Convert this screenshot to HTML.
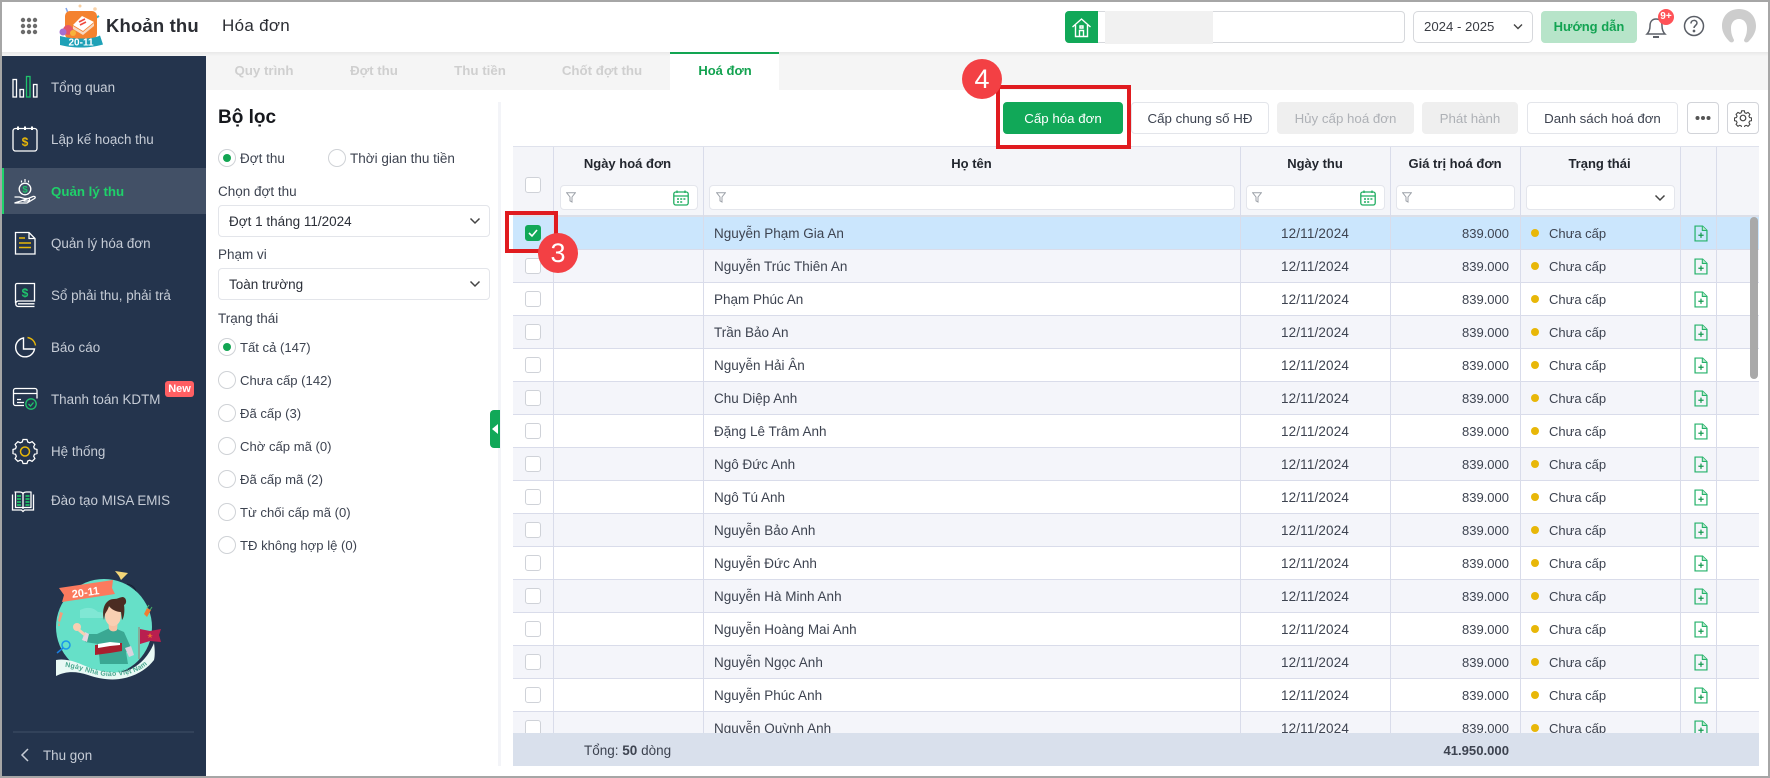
<!DOCTYPE html>
<html lang="vi"><head><meta charset="utf-8"><title>Khoản thu - Hóa đơn</title>
<style>
*{box-sizing:border-box}
html,body{margin:0;padding:0;width:1770px;height:778px;overflow:hidden;background:#fff}
body{font-family:"Liberation Sans",sans-serif;font-size:13.5px;color:#3d4350;position:relative}
.a,.t,.btn,.sel,.rd,.cb{position:absolute}
.t{white-space:nowrap;line-height:20px;height:20px;margin-top:1px}
.frame{position:absolute;left:0;top:0;width:1770px;height:778px;border:2px solid #a6a6a6;pointer-events:none;z-index:50}
.side{position:absolute;left:2px;top:52px;width:204px;height:724px;background:#24344d}
.m{color:#c6ccd6;font-size:13.4px}
.r{font-size:13.1px}
.btn{top:102px;height:32px;border:1px solid #e3e5ea;border-radius:4px;background:#fff;text-align:center;line-height:31px;color:#3d4350;font-size:13.3px}
.btn.dis{background:#efefef;border-color:#efefef;color:#aeb1b6}
.tab{position:absolute;top:67px;font-weight:bold;color:#cfcfcf;font-size:13.3px;line-height:20px;transform:translate(-50%,-6px);white-space:nowrap}
.sel{left:218px;width:272px;height:32px;border:1px solid #e3e5ea;border-radius:4px;background:#fff;padding-left:10px;line-height:31px;color:#2b2f38}
.rd{left:218px;width:18px;height:18px;border-radius:50%;border:1px solid #cfd2d6;background:#fff}
.rd.on::after{content:"";position:absolute;left:4px;top:4px;width:8px;height:8px;border-radius:50%;background:#12a552}
.cb{left:525px;width:16px;height:16px;border:1px solid #cfd2d8;border-radius:3px;background:#fff}
.grid{position:absolute;left:513px;top:146px;width:1246px;height:620px;overflow:hidden;background:#fff;border-top:1px solid #dfe2ec}
.head{position:absolute;left:0;top:0;width:1246px;height:70px;background:#f4f5f9;border-bottom:2px solid #dcdfe8}
.row{position:absolute;left:0;width:1246px;height:33px;border-bottom:1px solid #d9dcea;line-height:33px}
.row.g{background:#f4f5fa}.row.s{background:#cbe6fd}
.row span{position:absolute;top:0;white-space:nowrap}
.n{left:201px}.d{left:732px;width:140px;text-align:center;letter-spacing:.15px}.v{right:250px;font-size:13px}
.c{position:absolute;top:0;width:1px;background:#d9dcea;height:587px;z-index:3}
.s-t{left:1036px;font-size:13px}
.dot{position:absolute;left:1018px;top:12px;width:8px;height:8px;border-radius:50%;background:#e8b708}
.row .cb{left:12px;top:8px}
.row svg{position:absolute;left:1181px;top:8px}
.h{position:absolute;top:7px;font-weight:bold;color:#22262e;text-align:center;line-height:20px;white-space:nowrap;font-size:13px}
.f{position:absolute;top:38px;height:25px;background:#fff;border:1px solid #e4e6ec;border-radius:4px}
.foot{position:absolute;left:0;top:586px;width:1246px;height:33px;background:#d9e0ec;z-index:6;line-height:34px}
.red{position:absolute;border:4px solid #e01b1f;z-index:20}
.num{position:absolute;width:40px;height:40px;border-radius:50%;background:#f34044;color:#fff;font-size:27px;text-align:center;line-height:40px;z-index:21}
</style></head><body>

<svg width="0" height="0" style="position:absolute"><defs>
<symbol id="doc" viewBox="0 0 16 19"><path d="M1.2 1h8.6l5 5v12H1.200z" fill="none" stroke="#25b26a" stroke-width="1.400"/><path d="M9.500 1v5h5.300" fill="#bfead2" stroke="#25b26a" stroke-width="1.200"/><path d="M8 8.500v6M5 11.500h6" stroke="#149a50" stroke-width="1.400"/></symbol>
<symbol id="fil" viewBox="0 0 10 11"><path d="M.7.800h8.600L6 5v5L4 8.800V5z" fill="none" stroke="#9ca1a8" stroke-width="1"/></symbol>
<symbol id="cal" viewBox="0 0 16 16"><rect x=".8" y="2" width="14.400" height="13" rx="2" fill="none" stroke="#1fad60" stroke-width="1.300"/><path d="M1 6h14M4 .5v2.500M12 .5v2.500" stroke="#1fad60" stroke-width="1.300"/><path d="M4 9h2M7.200 9h2M10.400 9h2M4 12h2M7.200 12h2" stroke="#1fad60" stroke-width="1.500"/></symbol>
</defs></svg>

<!-- header -->
<div class="a" style="left:0;top:0;width:1770px;height:52px;background:#fff"></div>
<svg class="a" style="left:20px;top:17px" width="18" height="18" fill="#6b6b6b"><circle cx="3" cy="3" r="2.200"/><circle cx="9" cy="3" r="2.200"/><circle cx="15" cy="3" r="2.200"/><circle cx="3" cy="9" r="2.200"/><circle cx="9" cy="9" r="2.200"/><circle cx="15" cy="9" r="2.200"/><circle cx="3" cy="15" r="2.200"/><circle cx="9" cy="15" r="2.200"/><circle cx="15" cy="15" r="2.200"/></svg>
<svg class="a" style="left:58px;top:3px" width="47" height="46" viewBox="0 0 47 46">
<circle cx="22" cy="3" r="1.500" fill="#f9cfa0"/><circle cx="37" cy="6" r="1.800" fill="#f9d2a8"/><path d="M8 5l2 5" stroke="#7fa2e8" stroke-width="1.500"/><path d="M36 16l5-3" stroke="#3ab4c8" stroke-width="2"/>
<rect x="7" y="8" width="32" height="28" rx="5" fill="#f4822f"/>
<path d="M24 13l12 6-11 9-10-6z" fill="#fff"/><path d="M15 23l10 6 11-9v3l-11 9-10-6z" fill="#f7d8c2"/><path d="M21 19l6-3M22 22l6-3" stroke="#ef4a3f" stroke-width="1.600"/>
<circle cx="10" cy="27" r="5" fill="#e5566a"/><circle cx="5" cy="29" r="3.500" fill="#a66fd0"/><circle cx="15" cy="30" r="3" fill="#f7b23b"/>
<path d="M2 33c8 2 14 2.500 22 2.500s14-1 18-3l3 9c-8 2-14 3-22 3s-15-1-21-2.500z" fill="#1ea1b7"/>
<text x="23" y="42.500" text-anchor="middle" font-family="Liberation Sans" font-weight="bold" font-size="10" fill="#fff">20-11</text></svg>
<div class="t" style="left:106px;top:15px;font-size:18.500px;font-weight:bold;color:#2b2d33;letter-spacing:.15px">Khoản thu</div>
<div class="t" style="left:222px;top:15px;font-size:17px;color:#2b2d33;letter-spacing:.3px">Hóa đơn</div>
<div class="a" style="left:1065px;top:11px;width:340px;height:32px;border:1px solid #d6d8dc;border-radius:4px;background:#fff"></div>
<div class="a" style="left:1065px;top:11px;width:33px;height:32px;background:#11a858;border-radius:4px 0 0 4px"></div>
<svg class="a" style="left:1071px;top:17px" width="21" height="21" viewBox="0 0 21 21" fill="none" stroke="#fff" stroke-width="1.400"><path d="M1.500 10L10.500 2l9 8M4.500 8v11.500h12V8"/><path d="M8.500 19.500v-6h4v6M9 9h3v2H9z"/></svg>
<div class="a" style="left:1105px;top:11px;width:108px;height:33px;background:#f1f1f1"></div>
<div class="a" style="left:1413px;top:11px;width:120px;height:32px;border:1px solid #d6d8dc;border-radius:5px;background:#fff"></div>
<div class="t" style="left:1424px;top:16px;font-size:13.200px;color:#3a3d44">2024 - 2025</div>
<svg class="a" style="left:1512px;top:23px" width="12" height="8" fill="none" stroke="#444" stroke-width="1.400"><path d="M2 1.500l4 4 4-4"/></svg>
<div class="a" style="left:1541px;top:11px;width:96px;height:32px;background:#b7e4c9;border-radius:4px;color:#12a352;text-align:center;line-height:31px;font-weight:bold;font-size:13px">Hướng dẫn</div>
<svg class="a" style="left:1644px;top:13px" width="24" height="28" viewBox="0 0 24 28" fill="none" stroke="#5d6169" stroke-width="1.500"><path d="M3 21c2-2 3-4 3-8 0-4 2-7 6-7s6 3 6 7c0 4 1 6 3 8z"/><path d="M9 24h6" stroke-width="2"/></svg>
<div class="a" style="left:1658px;top:9px;width:16px;height:16px;border-radius:50%;background:#ff5257;color:#fff;font-size:10px;font-weight:bold;text-align:center;line-height:16px">9+</div>
<svg class="a" style="left:1683px;top:15px" width="22" height="22" viewBox="0 0 22 22" fill="none" stroke="#5a5e66" stroke-width="1.500"><circle cx="11" cy="11" r="9.500"/><path d="M8 8.500c0-4 6-4 6-.5 0 2.500-3 2.500-3 5"/><circle cx="11" cy="16" r=".6"/></svg>
<svg class="a" style="left:1722px;top:9px" width="34" height="34" viewBox="0 0 34 34"><path d="M8 33C3 28 0 23 0 17 0 7 7 0 17 0s17 7 17 17c0 6-3 11-8 16-2 1-4 0-4-2 2-4 3-7 3-12 0-5-3-9-8-9s-8 4-8 9c0 5 1 8 3 12 0 2-2 3-4 2z" fill="#cdcdcd"/></svg>
<div class="a" style="left:0;top:52px;width:1770px;height:4px;background:linear-gradient(#e9e9e9,#f5f5f5);z-index:2"></div>

<!-- tabs -->
<div class="a" style="left:206px;top:52px;width:1562px;height:38px;background:#f5f5f5"></div>
<div class="a" style="left:670px;top:52px;width:109px;height:38px;background:#fff;border-top:2px solid #12a552;z-index:3"></div>
<div class="tab" style="left:264px">Quy trình</div>
<div class="tab" style="left:374px">Đợt thu</div>
<div class="tab" style="left:480px">Thu tiền</div>
<div class="tab" style="left:602px">Chốt đợt thu</div>
<div class="tab" style="left:725px;color:#12a24f;z-index:4;font-size:13px">Hoá đơn</div>

<!-- sidebar -->
<div class="side"></div>
<div class="a" style="left:2px;top:168px;width:204px;height:46px;background:#425066"></div>
<div class="a" style="left:2px;top:168px;width:2px;height:46px;background:#1fd36b"></div>
<svg class="a" style="left:0;top:52px" width="206" height="724" viewBox="0 52 206 724" fill="none" stroke="#fff" stroke-width="1.300">
<rect x="13" y="79.500" width="3.500" height="17.500"/><rect x="20" y="89.500" width="3.500" height="7.500"/><rect x="26.500" y="76.500" width="3.500" height="20.500" stroke="#1fc46c"/><rect x="33.500" y="84.500" width="3.500" height="12.500"/>
<rect x="13" y="128.500" width="24" height="22.500" rx="2.500"/><path d="M18 126.500v3.500M25 126.500v3.500M32 126.500v3.500" stroke-width="2"/><text x="25" y="146" text-anchor="middle" font-size="12" font-weight="bold" fill="#e8b708" stroke="none" font-family="Liberation Sans">$</text>
<circle cx="25" cy="189" r="5.800"/><text x="25" y="192.500" text-anchor="middle" font-size="9.500" font-weight="bold" fill="#1fc46c" stroke="none" font-family="Liberation Sans">$</text><path d="M25 179v3M21.500 180.500v2M28.500 180.500v2" stroke-width="1.200"/><path d="M14.500 197h5l5 1.500h4c1.500 0 1.500 2.500-1 2.500h-4M27 199l6-2.500c2-.5 3 1 1.500 2L27 203H14.500z"/>
<path d="M15.500 232.500h13.500l6 6v15.500H15.500zM29 232.500v6h6"/><path d="M19 238h6M19 243h12M19 247.500h12" stroke="#e8b708" stroke-width="1.500"/>
<path d="M15.500 303V285a1.500 1.500 0 0 1 1.500-1.500h17.500V301H18a2.800 2.800 0 0 0 0 5.500h16.500"/><path d="M18 303.800h16.500"/><text x="25" y="297" text-anchor="middle" font-size="12" font-weight="bold" fill="#1fc46c" stroke="none" font-family="Liberation Sans">$</text>
<path d="M23.500 338A9.500 9.500 0 1 0 34.500 349H23.500z" stroke-width="1.400"/><path d="M27.500 337.500a9.500 9.500 0 0 1 8 8" stroke="#e8b708" stroke-width="1.400"/>
<path d="M24 405.500H15.500a2 2 0 0 1-2-2v-13a2 2 0 0 1 2-2h19.500a2 2 0 0 1 2 2v8M13.500 393.500h23.500M17 399.500h4M17 402.500h7"/><circle cx="31" cy="404" r="5.200" stroke="#1fc46c"/><path d="M28.500 404l2 2 3-3.500" stroke="#1fc46c"/>
<path d="M22.500 439.500h5l1 3.200 2.500 1 3-1.500 3.500 3.500-1.500 3 1 2.500 3.200 1v5l-3.200 1-1 2.500 1.500 3-3.500 3.500-3-1.500-2.500 1-1 3.200h-5l-1-3.200-2.500-1-3 1.500-3.500-3.500 1.500-3-1-2.500-3.200-1v-5l3.200-1 1-2.500-1.500-3 3.500-3.500 3 1.500 2.500-1z" transform="translate(25,451.500) scale(.79) translate(-25,-454.700)" stroke-width="1.600"/><circle cx="25" cy="451.500" r="4.500" stroke="#e8b708" stroke-width="1.500"/>
<path d="M12.500 494.500v15.500h9l1.500 1.500 1.500-1.500h9V494.500"/><path d="M14.500 492h5c2 0 3.500.8 3.500 2.500V509M31.500 492h-5c-2 0-3.500.8-3.500 2.500"/><path d="M15.500 492v15.500h7.500M31 492v15.500h-7.500"/><path d="M17 496h4M17 499h4M17 502h4M17 505h4M25.500 496h4M25.500 499h4M25.500 502h4M25.500 505h4" stroke="#1fd36b" stroke-width="1.500"/>
<path d="M28 749l-6 6 6 6" stroke="#c6ccd6" stroke-width="1.500"/>
<path d="M13 732h181" stroke="#3f4f66" stroke-width="1"/>
</svg>
<div class="t m" style="left:51px;top:77px">Tổng quan</div>
<div class="t m" style="left:51px;top:129px">Lập kế hoạch thu</div>
<div class="t" style="left:51px;top:181px;color:#1fd16a;font-weight:bold;font-size:13.300px">Quản lý thu</div>
<div class="t m" style="left:51px;top:233px">Quản lý hóa đơn</div>
<div class="t m" style="left:51px;top:285px">Sổ phải thu, phải trả</div>
<div class="t m" style="left:51px;top:337px">Báo cáo</div>
<div class="t m" style="left:51px;top:389px">Thanh toán KDTM</div>
<div class="a" style="left:165px;top:381px;width:29px;height:16px;background:#ff5f63;border-radius:3px;color:#fff;font-size:11px;font-weight:bold;text-align:center;line-height:16px">New</div>
<div class="t m" style="left:51px;top:441px">Hệ thống</div>
<div class="t m" style="left:51px;top:490px">Đào tạo MISA EMIS</div>
<div class="t m" style="left:43px;top:745px">Thu gọn</div>

<!-- illustration -->
<svg class="a" style="left:50px;top:565px" width="120" height="120" viewBox="50 565 120 120">
<path d="M127 584c5 1 9 4 9 9" fill="none" stroke="#111c2c" stroke-width=".8"/>
<path d="M115 571l13 2-7 7-2-4z" fill="#f4d678"/>
<circle cx="104" cy="627" r="48" fill="#66e0c8"/>
<path d="M80 610c8-4 14-2 18 2 6 0 9 3 8 6H80zM85 640c6-3 12-2 14 1H85z" fill="#80e7d4"/>
<path d="M59 588l54-8-1 8 3 6-53 8 2-7z" fill="#fb7a5e"/>
<text x="86" y="596" transform="rotate(-8 86 596)" text-anchor="middle" font-family="Liberation Sans" font-weight="bold" font-size="11" fill="#fff">20-11</text>
<path d="M112 627L97 634l-10 0-2 8 13 2 2 20h28l-2-12 6-2-8-18z" fill="#3aa893"/>
<path d="M117 630c-2 2-6 2-8-1l-1-10h10z" fill="#f6c3a5"/>
<ellipse cx="113" cy="616" rx="8" ry="10" fill="#f8cfb2"/>
<path d="M104 620C101 608 106 599 114 599c4 0 6-2 9-2 4 1 4 7 1 8 1 6 0 13-2 15l-1-8c-5 0-10-3-12-6-1 4-3 6-4 8z" fill="#4b2c22"/>
<path d="M95 645l15-2 12 0v8l-12 2-15 2z" fill="#a81f2e"/><path d="M98 644l12-2 10 1v2l-10 1-12 2z" fill="#fff"/>
<path d="M85 632l-3 8 5 2 2-8z" fill="#e6d5e0"/><circle cx="77" cy="627" r="4" fill="#f8cfb2"/><path d="M79 630l6 5" stroke="#f8cfb2" stroke-width="3"/>
<path d="M125 648l4 9 5-2-3-9z" fill="#dcd2de"/>
<path d="M139 627v32" stroke="#8f9a8a" stroke-width="1.500"/><path d="M140 629l10 2 11-2-2 6 2 7-11-1-10 3z" fill="#b91f4f"/><path d="M150 633l1 2h2l-2 1 1 2-2-1-2 1 1-2-2-1h2z" fill="#ec6b2d"/>
<path d="M60 612l-2 9 2 1 3-9zM59 622l-1 4 2 0z" fill="#f39d7c"/>
<circle cx="66" cy="645" r="4" fill="none" stroke="#1b97ea" stroke-width="1.500"/><path d="M63 648l-6 5" stroke="#1b7ee0" stroke-width="1.500"/>
<path d="M144 614l3-6 4 2-4 7z" fill="#f07d32"/><path d="M147 608l2-3M150 610l2-3" stroke="#45b26b" stroke-width="1"/>
<path d="M56 660C68 658 78 663 90 668 102 672 112 673 123 672 135 669 147 660 154 643 155 650 155 656 154 660 148 668 138 675 125 678 112 681 100 679 88 675 76 671 66 671 56 676z" fill="#e9f9f5"/>
<path id="bp" d="M65 667C80 668 95 677 112 676S140 672 150 662" fill="none"/>
<text font-family="Liberation Sans" font-weight="bold" font-size="7" fill="#4aa88f"><textPath href="#bp" textLength="86">Ngày Nhà Giáo Việt Nam</textPath></text>
</svg>

<!-- filter -->
<div class="t" style="left:218px;top:106px;font-size:19px;font-weight:bold;color:#16181d;line-height:22px;height:22px">Bộ lọc</div>
<div class="rd on" style="top:149px"></div><div class="t" style="left:240px;top:148px">Đợt thu</div>
<div class="rd" style="left:328px;top:149px"></div><div class="t" style="left:350px;top:148px">Thời gian thu tiền</div>
<div class="t" style="left:218px;top:181px">Chọn đợt thu</div>
<div class="sel" style="top:205px">Đợt 1 tháng 11/2024</div>
<div class="t" style="left:218px;top:244px">Phạm vi</div>
<div class="sel" style="top:268px">Toàn trường</div>
<svg class="a" style="left:469px;top:217px" width="12" height="8" fill="none" stroke="#444" stroke-width="1.500"><path d="M1.500 1.500l4.500 4.500 4.500-4.500"/></svg>
<svg class="a" style="left:469px;top:280px" width="12" height="8" fill="none" stroke="#444" stroke-width="1.500"><path d="M1.500 1.500l4.500 4.500 4.500-4.500"/></svg>
<div class="t" style="left:218px;top:308px">Trạng thái</div>
<div class="rd on" style="top:338px"></div><div class="t r" style="left:240px;top:337px">Tất cả (147)</div>
<div class="rd" style="top:371px"></div><div class="t r" style="left:240px;top:370px">Chưa cấp (142)</div>
<div class="rd" style="top:404px"></div><div class="t r" style="left:240px;top:403px">Đã cấp (3)</div>
<div class="rd" style="top:437px"></div><div class="t r" style="left:240px;top:436px">Chờ cấp mã (0)</div>
<div class="rd" style="top:470px"></div><div class="t r" style="left:240px;top:469px">Đã cấp mã (2)</div>
<div class="rd" style="top:503px"></div><div class="t r" style="left:240px;top:502px">Từ chối cấp mã (0)</div>
<div class="rd" style="top:536px"></div><div class="t r" style="left:240px;top:535px">TĐ không hợp lệ (0)</div>
<div class="a" style="left:498px;top:102px;width:3px;height:664px;background:#f3f4f8"></div>
<div class="a" style="left:490px;top:410px;width:10px;height:38px;background:#11a858;border-radius:4px 0 0 4px"></div>
<svg class="a" style="left:492px;top:424px" width="7" height="10"><path d="M6 0v10L0 5z" fill="#fff"/></svg>

<!-- toolbar -->
<div class="btn" style="left:1003px;width:120px;background:#11a858;border-color:#11a858;color:#fff">Cấp hóa đơn</div>
<div class="btn" style="left:1131px;width:138px">Cấp chung số HĐ</div>
<div class="btn dis" style="left:1277px;width:137px">Hủy cấp hoá đơn</div>
<div class="btn dis" style="left:1422px;width:96px">Phát hành</div>
<div class="btn" style="left:1527px;width:151px">Danh sách hoá đơn</div>
<div class="btn" style="left:1687px;width:32px;border-color:#d2d4d9"></div>
<svg class="a" style="left:1695px;top:115px" width="16" height="6" fill="#555"><circle cx="2.500" cy="3" r="2"/><circle cx="8" cy="3" r="2"/><circle cx="13.500" cy="3" r="2"/></svg>
<div class="btn" style="left:1727px;width:32px;border-color:#d2d4d9"></div>
<svg class="a" style="left:1734px;top:109px" width="18" height="18" viewBox="0 0 18 18" fill="none" stroke="#444" stroke-width="1.200"><path d="M7.500 1h3l.5 2.200 1.600.7 2-1.100 2.100 2.100-1.100 2 .7 1.600 2.200.5v3l-2.200.5-.7 1.600 1.100 2-2.100 2.100-2-1.100-1.600.7-.5 2.200h-3l-.5-2.200-1.600-.7-2 1.100-2.100-2.100 1.100-2-.7-1.600-2.200-.5v-3l2.200-.5.700-1.600-1.100-2 2.100-2.100 2 1.100 1.600-.7z" transform="translate(.9,.9) scale(.9)"/><circle cx="9" cy="9" r="2.800"/></svg>

<!-- grid -->
<div class="grid">
 <div class="head"></div>
 <i class="c" style="left:40px"></i><i class="c" style="left:190px"></i><i class="c" style="left:727px"></i><i class="c" style="left:877px"></i><i class="c" style="left:1007px"></i><i class="c" style="left:1167px"></i><i class="c" style="left:1203px"></i>
 <div class="cb" style="left:12px;top:30px"></div>
 <div class="h" style="left:40px;width:149px">Ngày hoá đơn</div>
 <div class="h" style="left:190px;width:537px">Họ tên</div>
 <div class="h" style="left:728px;width:148px">Ngày thu</div>
 <div class="h" style="left:877px;width:130px">Giá trị hoá đơn</div>
 <div class="h" style="left:1007px;width:159px">Trạng thái</div>
 <div class="f" style="left:47px;width:138px"></div>
 <div class="f" style="left:196px;width:526px"></div>
 <div class="f" style="left:733px;width:139px"></div>
 <div class="f" style="left:883px;width:119px"></div>
 <div class="f" style="left:1013px;width:149px"></div>
 <svg class="a" style="left:53px;top:45px;z-index:4" width="10" height="11"><use href="#fil"/></svg>
 <svg class="a" style="left:203px;top:45px;z-index:4" width="10" height="11"><use href="#fil"/></svg>
 <svg class="a" style="left:739px;top:45px;z-index:4" width="10" height="11"><use href="#fil"/></svg>
 <svg class="a" style="left:889px;top:45px;z-index:4" width="10" height="11"><use href="#fil"/></svg>
 <svg class="a" style="left:160px;top:43px;z-index:4" width="16" height="16"><use href="#cal"/></svg>
 <svg class="a" style="left:847px;top:43px;z-index:4" width="16" height="16"><use href="#cal"/></svg>
 <svg class="a" style="left:1141px;top:47px;z-index:4" width="12" height="9" fill="none" stroke="#444" stroke-width="1.500"><path d="M1.500 1.500l4.500 4.500 4.500-4.500"/></svg>

 <div class="row s" style="top:70px"><i class="cb" style="background:#11a858;border-color:#11a858"></i><svg style="left:14px;top:11px" width="12" height="10" fill="none" stroke="#fff" stroke-width="1.600"><path d="M2 5l3 3 5-6"/></svg><span class="n">Nguyễn Phạm Gia An</span><span class="d">12/11/2024</span><span class="v">839.000</span><i class="dot"></i><span class="s-t">Chưa cấp</span><svg width="14" height="17"><use href="#doc"/></svg></div>
 <div class="row g" style="top:103px"><i class="cb"></i><span class="n">Nguyễn Trúc Thiên An</span><span class="d">12/11/2024</span><span class="v">839.000</span><i class="dot"></i><span class="s-t">Chưa cấp</span><svg width="14" height="17"><use href="#doc"/></svg></div>
 <div class="row" style="top:136px"><i class="cb"></i><span class="n">Phạm Phúc An</span><span class="d">12/11/2024</span><span class="v">839.000</span><i class="dot"></i><span class="s-t">Chưa cấp</span><svg width="14" height="17"><use href="#doc"/></svg></div>
 <div class="row g" style="top:169px"><i class="cb"></i><span class="n">Trần Bảo An</span><span class="d">12/11/2024</span><span class="v">839.000</span><i class="dot"></i><span class="s-t">Chưa cấp</span><svg width="14" height="17"><use href="#doc"/></svg></div>
 <div class="row" style="top:202px"><i class="cb"></i><span class="n">Nguyễn Hải Ân</span><span class="d">12/11/2024</span><span class="v">839.000</span><i class="dot"></i><span class="s-t">Chưa cấp</span><svg width="14" height="17"><use href="#doc"/></svg></div>
 <div class="row g" style="top:235px"><i class="cb"></i><span class="n">Chu Diệp Anh</span><span class="d">12/11/2024</span><span class="v">839.000</span><i class="dot"></i><span class="s-t">Chưa cấp</span><svg width="14" height="17"><use href="#doc"/></svg></div>
 <div class="row" style="top:268px"><i class="cb"></i><span class="n">Đặng Lê Trâm Anh</span><span class="d">12/11/2024</span><span class="v">839.000</span><i class="dot"></i><span class="s-t">Chưa cấp</span><svg width="14" height="17"><use href="#doc"/></svg></div>
 <div class="row g" style="top:301px"><i class="cb"></i><span class="n">Ngô Đức Anh</span><span class="d">12/11/2024</span><span class="v">839.000</span><i class="dot"></i><span class="s-t">Chưa cấp</span><svg width="14" height="17"><use href="#doc"/></svg></div>
 <div class="row" style="top:334px"><i class="cb"></i><span class="n">Ngô Tú Anh</span><span class="d">12/11/2024</span><span class="v">839.000</span><i class="dot"></i><span class="s-t">Chưa cấp</span><svg width="14" height="17"><use href="#doc"/></svg></div>
 <div class="row g" style="top:367px"><i class="cb"></i><span class="n">Nguyễn Bảo Anh</span><span class="d">12/11/2024</span><span class="v">839.000</span><i class="dot"></i><span class="s-t">Chưa cấp</span><svg width="14" height="17"><use href="#doc"/></svg></div>
 <div class="row" style="top:400px"><i class="cb"></i><span class="n">Nguyễn Đức Anh</span><span class="d">12/11/2024</span><span class="v">839.000</span><i class="dot"></i><span class="s-t">Chưa cấp</span><svg width="14" height="17"><use href="#doc"/></svg></div>
 <div class="row g" style="top:433px"><i class="cb"></i><span class="n">Nguyễn Hà Minh Anh</span><span class="d">12/11/2024</span><span class="v">839.000</span><i class="dot"></i><span class="s-t">Chưa cấp</span><svg width="14" height="17"><use href="#doc"/></svg></div>
 <div class="row" style="top:466px"><i class="cb"></i><span class="n">Nguyễn Hoàng Mai Anh</span><span class="d">12/11/2024</span><span class="v">839.000</span><i class="dot"></i><span class="s-t">Chưa cấp</span><svg width="14" height="17"><use href="#doc"/></svg></div>
 <div class="row g" style="top:499px"><i class="cb"></i><span class="n">Nguyễn Ngọc Anh</span><span class="d">12/11/2024</span><span class="v">839.000</span><i class="dot"></i><span class="s-t">Chưa cấp</span><svg width="14" height="17"><use href="#doc"/></svg></div>
 <div class="row" style="top:532px"><i class="cb"></i><span class="n">Nguyễn Phúc Anh</span><span class="d">12/11/2024</span><span class="v">839.000</span><i class="dot"></i><span class="s-t">Chưa cấp</span><svg width="14" height="17"><use href="#doc"/></svg></div>
 <div class="row g" style="top:565px"><i class="cb"></i><span class="n">Nguyễn Quỳnh Anh</span><span class="d">12/11/2024</span><span class="v">839.000</span><i class="dot"></i><span class="s-t">Chưa cấp</span><svg width="14" height="17"><use href="#doc"/></svg></div>

 <div class="foot"><span class="t" style="left:71px;top:7px">Tổng: <b>50</b> dòng</span><span class="t" style="right:250px;top:7px;font-weight:bold;font-size:13.100px">41.950.000</span></div>
 <div class="a" style="left:1237px;top:70px;width:8px;height:162px;background:#a9a9a9;border-radius:4px;z-index:5"></div>
</div>

<!-- annotations -->
<div class="red" style="left:996px;top:85px;width:135px;height:64px"></div>
<div class="red" style="left:505px;top:211px;width:53px;height:42px"></div>
<div class="num" style="left:962px;top:59px">4</div>
<div class="num" style="left:538px;top:233px">3</div>
<div class="frame"></div>
</body></html>
